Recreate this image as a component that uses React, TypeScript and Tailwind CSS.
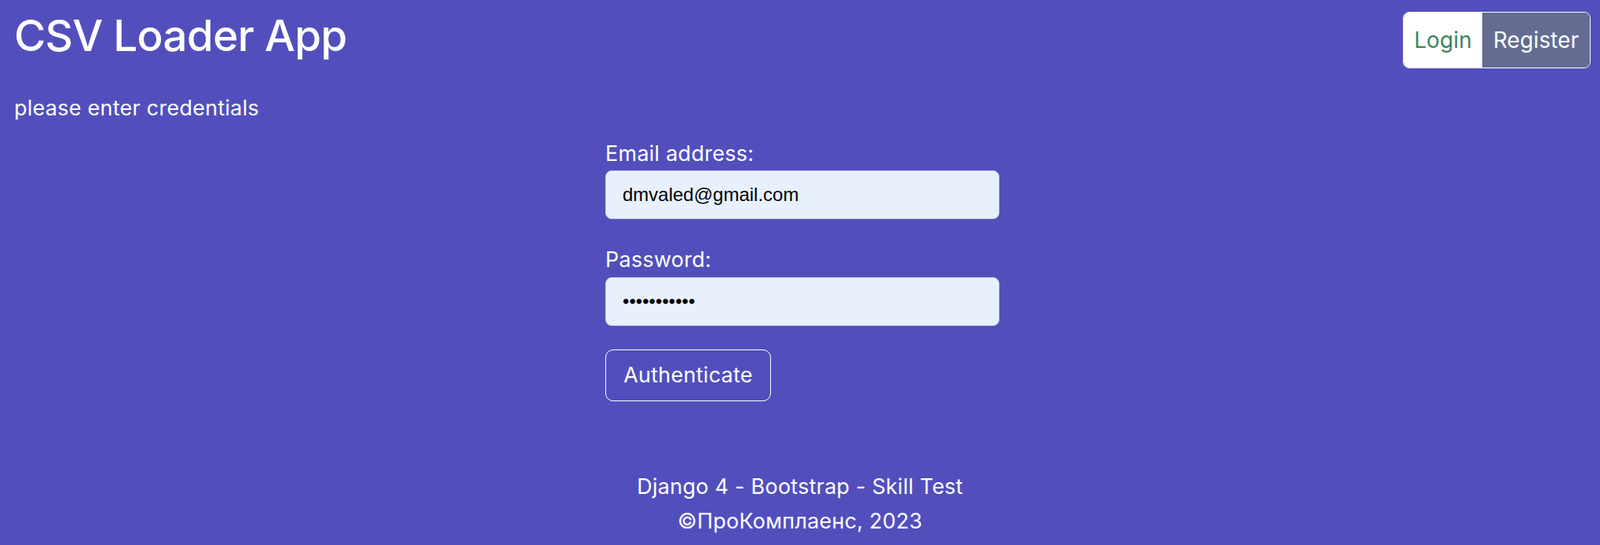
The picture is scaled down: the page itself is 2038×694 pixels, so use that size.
import React from "react";

export default function App() {
  return (
    <div
      className="min-h-screen w-full bg-[#524fbd] text-white"
      style={{ fontFamily: "Inter, 'Noto Sans', sans-serif" }}
    >
      <header className="flex items-start justify-between">
        <h1 className="ml-[18px] mt-[12px] text-[55px] font-medium leading-[1.2] tracking-[-0.8px]">
          CSV Loader App
        </h1>
        <div className="mr-[12px] mt-[15px] flex h-[72px] overflow-hidden rounded-[8px] border border-white">
          <a className="flex w-[100px] items-center justify-center bg-white text-[28px] tracking-[0.1px] text-[#3b8659]">
            Login
          </a>
          <a className="flex w-[137px] items-center justify-center bg-[#636d91] text-[28px] tracking-[0.1px] text-white">
            Register
          </a>
        </div>
      </header>
      <p className="ml-[18px] mt-[31px] text-[27px] leading-[39px] tracking-[0.25px]">please enter credentials</p>
      <div className="flex justify-center">
        <form className="w-[508px] pl-[6px]">
          <label className="mt-[19px] block text-[27px] leading-[39px] tracking-[0.25px]">Email address:</label>
          <input
            readOnly
            value="dmvaled@gmail.com"
            className="mt-[2px] block h-[62px] w-full rounded-[8px] border border-[#c7cbe6] bg-[#e8f0fe] px-[21px] text-[24px] text-black outline-none"
            style={{ fontFamily: "'Liberation Sans', Arial, sans-serif" }}
          />
          <label className="mt-[32px] block text-[27px] leading-[39px] tracking-[0.25px]">Password:</label>
          <input
            readOnly
            type="password"
            value="12345678901"
            className="mt-[3px] block h-[62px] w-full rounded-[8px] border border-[#c7cbe6] bg-[#e8f0fe] px-[21px] text-[24px] text-black outline-none"
            style={{ fontFamily: "'Liberation Sans', Arial, sans-serif" }}
          />
          <button
            type="button"
            className="mt-[30px] h-[66px] w-[211px] rounded-[10px] border border-white text-[27px] tracking-[0.25px] text-white"
          >
            Authenticate
          </button>
        </form>
      </div>
      <footer className="mt-[87px] text-center text-[27px] leading-[44px] tracking-[0.25px]">
        <div>Django 4 - Bootstrap - Skill Test</div>
        <div>©ПроКомплаенс, 2023</div>
      </footer>
    </div>
  );
}
